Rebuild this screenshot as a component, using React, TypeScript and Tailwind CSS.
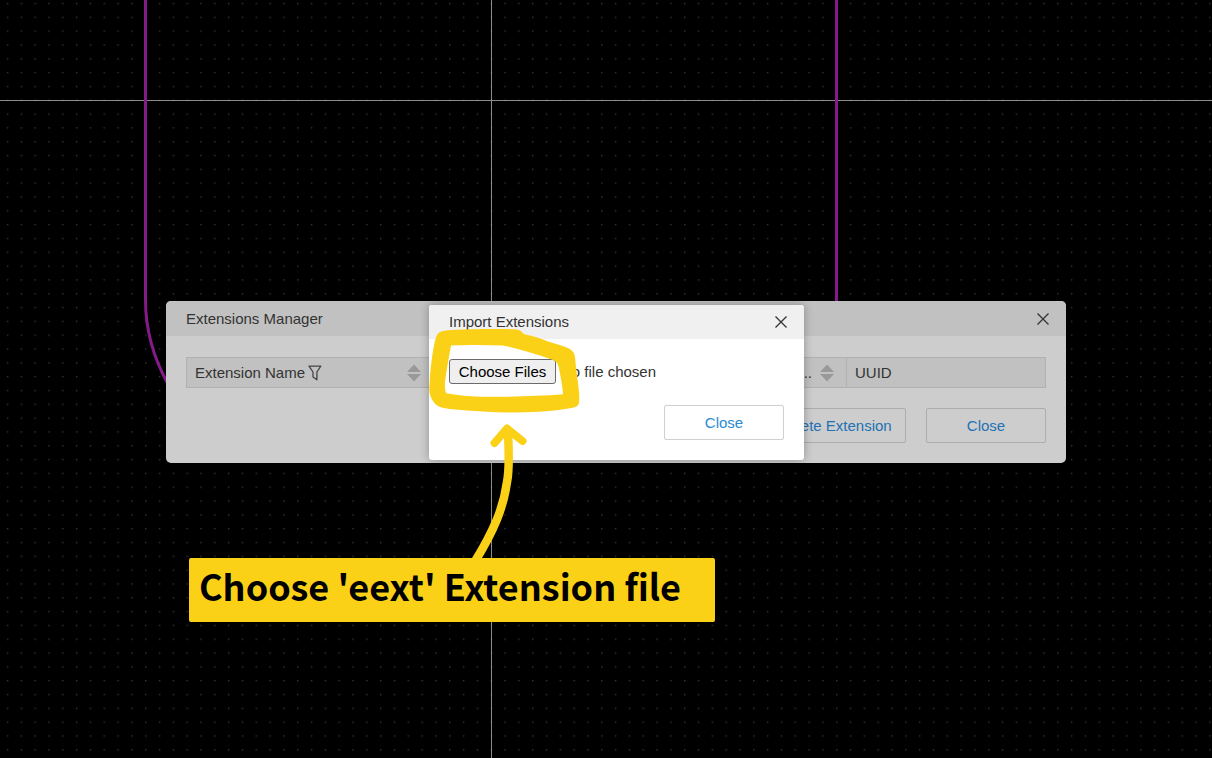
import React from "react";

function CanvasBackdrop() {
  return (
    <svg className="absolute inset-0 h-full w-full" aria-hidden="true">
      <defs>
        <pattern id="dots" x="0.9" y="-3.1" width="13.82" height="13.82" patternUnits="userSpaceOnUse">
          <rect x="6.2" y="6.2" width="1" height="1" fill="#666" />
        </pattern>
      </defs>
      <rect width="100%" height="100%" fill="url(#dots)" />
      <path d="M0 100.5H4000M491.5 0V4000" stroke="#8c8c8c" strokeWidth="1" fill="none" />
      <path
        d="M145.5 0V300C145.5 330 153 357 168 384M836.5 0V310"
        stroke="#861a8a"
        strokeWidth="3"
        fill="none"
      />
    </svg>
  );
}

function CloseIcon() {
  return (
    <svg width="12" height="12" viewBox="0 0 12 12" fill="none" stroke="#333" strokeWidth="1.3" aria-hidden="true">
      <path d="M0.5 0.5L11.5 11.5M11.5 0.5L0.5 11.5" />
    </svg>
  );
}

function FilterIcon() {
  return (
    <svg width="14" height="16" viewBox="0 0 14 16" fill="none" stroke="#444" strokeWidth="1.3" aria-hidden="true">
      <path d="M1 1.2H12.8L8.9 7V14.8L5 12V7Z" strokeLinejoin="round" />
    </svg>
  );
}

function SortIcon() {
  return (
    <svg width="14" height="18" viewBox="0 0 14 18" fill="#999" aria-hidden="true">
      <path d="M7 0.5L14 8H0ZM7 17.5L14 10H0Z" />
    </svg>
  );
}

function ExtensionsManager() {
  return (
    <section
      aria-label="Extensions Manager"
      className="absolute left-[166px] top-[301px] w-[900px] overflow-hidden rounded-[5px] bg-[#cdcdcd]"
    >
      <header className="flex h-[35px] items-center justify-between bg-[#c1c1c1] pl-5 pr-[17px]">
        <h1>Extensions Manager</h1>
        <button type="button" aria-label="Close Extensions Manager" className="flex">
          <CloseIcon />
        </button>
      </header>
      <div className="px-5 pb-5 pt-[21px]">
        <table className="w-full table-fixed border-collapse text-left">
          <thead>
            <tr className="h-[30px] bg-[#c1c1c1]">
              <th className="w-[243px] border border-[#b1b1b1] px-2 font-normal">
                <div className="flex items-center justify-between">
                  <span className="flex items-center gap-[3px]">
                    Extension Name
                    <FilterIcon />
                  </span>
                  <SortIcon />
                </div>
              </th>
              <th className="border border-[#b1b1b1] px-3 font-normal">
                <div className="flex items-center justify-end gap-2">
                  ...
                  <SortIcon />
                </div>
              </th>
              <th className="w-[199px] border border-[#b1b1b1] px-2 font-normal">UUID</th>
            </tr>
          </thead>
        </table>
        <div className="mt-5 flex justify-end gap-5 text-[#2272b5]">
          <button type="button" className="h-[35px] w-[142px] rounded-[2px] border border-[#adadad]">
            Delete Extension
          </button>
          <button type="button" className="h-[35px] w-[120px] rounded-[2px] border border-[#adadad]">
            Close
          </button>
        </div>
      </div>
    </section>
  );
}

function ImportExtensions() {
  return (
    <section
      aria-label="Import Extensions"
      className="absolute left-[429px] top-[305px] w-[375px] rounded-[3px] bg-white shadow-[0_0_10px_rgba(0,0,0,0.3)]"
    >
      <header className="flex h-[34px] items-center justify-between rounded-t-[3px] bg-[#f0f0f0] pl-5 pr-[17px]">
        <h2>Import Extensions</h2>
        <button type="button" aria-label="Close Import Extensions" className="flex">
          <CloseIcon />
        </button>
      </header>
      <div className="px-5 pb-5 pt-5">
        <input
          type="file"
          multiple
          aria-label="Extension files"
          className="block w-full file:mr-[5px] file:h-[25px] file:w-[107px] file:rounded-[3px] file:border file:border-solid file:border-[#6b6b6b] file:bg-[#efefef] file:p-0 file:text-[15px] file:text-black"
        />
        <div className="mt-[21px] flex justify-end">
          <button type="button" className="h-[35px] w-[120px] rounded-[2px] border border-[#d0d0d0] text-[#2b8ad4]">
            Close
          </button>
        </div>
      </div>
    </section>
  );
}

function Annotation() {
  return (
    <>
      <svg className="pointer-events-none absolute inset-0 h-full w-full" aria-hidden="true">
        <path
          fill="#fbd118"
          fillRule="evenodd"
          d="M436.500 336C438 332.500 441 331 446 330.500C465 329 500 328.800 515 329.300C519 329.500 521 331 524 334.200C532 335.500 541 338.500 548 341.500C556 344 564 346 569.500 348.800C573 351 574.500 353.500 575 357C575.500 362 576 367 576.500 372C577.300 379 578.500 385 579 392C579.300 396 579.500 400 579 403C578 406.500 575 407.500 571.500 408C565 409 559 410 551.500 410.800C540 412 528 412.500 515 412.500C495 412.500 475 411.500 458 409.800C450 409 442 408.500 438 406C433 403 430.500 397 429.600 393C429 390 429.300 387 429.600 384C430 374 431 364 432.500 354C433.500 348 434.500 341 436.500 336ZM451 345.500C449 357 446.500 370 445 382C444.700 387 445 391.500 446.500 393.200C458 395.500 472 396.700 488 396.800C515 397 540 396 563 394.300C562.500 386 560.500 376 558.500 366C557.500 363 556 361.300 553 360C536 354 518 348.500 503 345.500C486 344.700 467 344.700 451 345.500Z"
        />
        <g fill="none" stroke="#fbd118" strokeLinecap="round" strokeLinejoin="round">
          <path strokeWidth="8" d="M494.500 443L507 428.500L522.500 441" />
          <path strokeWidth="8.500" d="M508 431C508.500 446 510 468 507 482C503.500 507 495 529 474 563" />
        </g>
      </svg>
      <p className="absolute left-[189px] top-[558px] flex h-16 w-[526px] rounded-[2px] bg-[#fbd118] px-[10px] font-['Noto_Sans_CJK_SC',sans-serif] text-[36px] font-bold leading-[54px] text-black">
        Choose 'eext' Extension file
      </p>
    </>
  );
}

export default function App() {
  return (
    <main className="relative min-h-screen overflow-hidden bg-black font-['Liberation_Sans',Arial,sans-serif] text-[15px] leading-5 text-[#333]">
      <CanvasBackdrop />
      <ExtensionsManager />
      <ImportExtensions />
      <Annotation />
    </main>
  );
}
